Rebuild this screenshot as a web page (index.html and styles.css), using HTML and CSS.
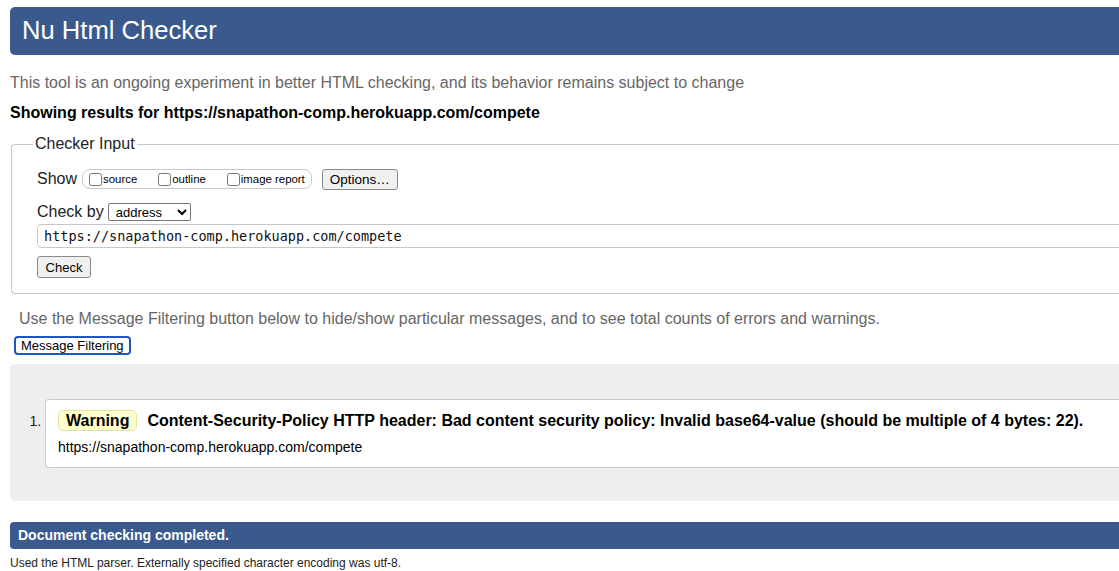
FILE: index.html
```html
<!DOCTYPE html>
<html lang="en">
<head>
<meta charset="utf-8">
<title>Showing results for https://snapathon-comp.herokuapp.com/compete - Nu Html Checker</title>
<link rel="stylesheet" href="styles.css">
</head>
<body>
<div class="page">
  <h1 class="title">Nu Html Checker</h1>
  <p class="intro">This tool is an ongoing experiment in better HTML checking, and its behavior remains subject to change</p>
  <p class="results-for">Showing results for https://snapathon-comp.herokuapp.com/compete</p>

  <form class="checker-form">
    <fieldset class="checker-input">
      <legend class="legend">Checker Input</legend>
      <div class="row show-row">
        <span class="label">Show</span>
        <span class="show-box">
          <label class="opt"><input type="checkbox" class="cb">source</label>
          <label class="opt"><input type="checkbox" class="cb">outline</label>
          <label class="opt"><input type="checkbox" class="cb">image report</label>
        </span>
        <button type="button" class="btn options-btn">Options…</button>
      </div>
      <div class="row checkby-row">
        <span class="label">Check by</span>
        <select class="select">
          <option>address</option>
        </select>
      </div>
      <div class="url-field">https://snapathon-comp.herokuapp.com/compete</div>
      <button type="button" class="btn check-btn">Check</button>
    </fieldset>
  </form>

  <p class="filter-note">Use the Message Filtering button below to hide/show particular messages, and to see total counts of errors and warnings.</p>
  <button type="button" class="btn filter-btn">Message Filtering</button>

  <div class="results">
    <ol class="messages">
      <li class="message">
        <p class="msg-line"><span class="badge">Warning</span><span class="msg-text">Content-Security-Policy HTTP header: Bad content security policy: Invalid base64-value (should be multiple of 4 bytes: 22).</span></p>
        <p class="msg-url">https://snapathon-comp.herokuapp.com/compete</p>
      </li>
    </ol>
  </div>

  <h2 class="done">Document checking completed.</h2>
  <p class="parser-note">Used the HTML parser. Externally specified character encoding was utf-8.</p>
</div>
</body>
</html>
```

FILE: styles.css
```css
html {
  overflow: hidden;
  background: #fff;
}
body {
  margin: 7px 0 0 10px;
  font-family: "Liberation Sans", Arial, sans-serif;
  color: #000;
}
.page {
  width: 1160px;
}
.title {
  margin: 0;
  height: 48px;
  line-height: 47px;
  padding-left: 12px;
  background: #3a598c;
  color: #fff;
  font-size: 25.6px;
  font-weight: normal;
  border-radius: 5px 0 0 5px;
}
.intro {
  margin: 18px 0 0;
  font-size: 16px;
  line-height: 20px;
  color: #666;
}
.results-for {
  margin: 10px 0 0;
  font-size: 16px;
  line-height: 20px;
  font-weight: bold;
}
.checker-form {
  margin: 11px 0 0 1px;
}
.checker-input {
  margin: 0;
  padding: 0 25px 15px;
  border: 1px solid #c8c8c8;
  border-right: none;
  border-radius: 4px 0 0 4px;
}
.legend {
  margin-left: -4px;
  padding: 0 2px;
  font-size: 16px;
  line-height: 20px;
  color: #222;
}
.row {
  display: flex;
  align-items: center;
}
.show-row {
  margin-top: 14px;
  height: 22px;
}
.label {
  font-size: 16px;
  color: #222;
}
.show-box {
  display: flex;
  align-items: center;
  height: 18px;
  margin-left: 5px;
  padding: 0 6px 0 5px;
  border: 1px solid #c8c8c8;
  border-radius: 8px;
  font-size: 11.4px;
}
.opt {
  display: flex;
  align-items: center;
  margin-right: 20px;
}
.opt:last-child {
  margin-right: 0;
}
.cb {
  margin: 0 1px 0 1px;
  width: 13px;
  height: 13px;
}
.btn {
  font-family: "Liberation Sans", Arial, sans-serif;
  font-size: 13px;
  color: #000;
  background: #f0f0f0;
  border: 1px solid #8a8a8a;
  border-radius: 3px;
  padding: 0 6px;
  margin: 0;
}
.options-btn {
  margin-left: 10px;
  height: 21px;
  font-size: 13.5px;
  padding: 0 7px;
}
.checkby-row {
  margin-top: 12px;
  height: 20px;
}
.select {
  margin-left: 4px;
  height: 18px;
  width: 83px;
  font-family: "Liberation Sans", Arial, sans-serif;
  font-size: 13px;
  border: 1px solid #777;
  border-radius: 2px;
  background: #fff;
  padding: 0 0 0 3px;
}
.url-field {
  margin-top: 2px;
  height: 22px;
  line-height: 22px;
  padding-left: 6px;
  border: 1px solid #c8c8c8;
  border-right: none;
  border-radius: 5px 0 0 5px;
  font-family: "DejaVu Sans Mono", "Liberation Mono", monospace;
  font-size: 13.5px;
  color: #111;
}
.check-btn {
  display: block;
  margin-top: 8px;
  height: 22px;
  width: 54px;
  padding: 0;
}
.filter-note {
  margin: 15px 0 0 9px;
  font-size: 16px;
  line-height: 20px;
  color: #666;
}
.filter-btn {
  display: block;
  margin: 7px 0 0 4px;
  height: 19px;
  padding: 0 5px;
  border: 2px solid #2056c4;
  border-radius: 4px;
  background: #fff;
  line-height: 14px;
}
.results {
  margin-top: 9px;
  padding: 35px 0 33px 35px;
  background: #eee;
  border-radius: 5px 0 0 5px;
}
.messages {
  margin: 0;
  padding: 0;
}
.message {
  padding: 10px 12px 11px;
  background: #fff;
  border: 1px solid #ccc;
  border-right: none;
  border-radius: 4px 0 0 4px;
}
.message::marker {
  font-size: 14px;
  color: #222;
}
.msg-line {
  margin: 0;
  display: flex;
  align-items: center;
  white-space: nowrap;
  font-size: 16px;
}
.badge {
  display: inline-block;
  padding: 0 7px;
  height: 19px;
  line-height: 19px;
  background: #ffffcc;
  border: 1px solid #e2e2a8;
  border-radius: 5px;
  font-weight: bold;
  margin-right: 10px;
}
.msg-text {
  font-weight: bold;
}
.msg-url {
  margin: 7px 0 0;
  font-size: 14px;
  line-height: 18px;
}
.done {
  margin: 21px 0 0;
  height: 27px;
  line-height: 27px;
  padding-left: 8px;
  background: #3a598c;
  color: #fff;
  font-size: 14px;
  font-weight: bold;
  border-radius: 4px 0 0 4px;
}
.parser-note {
  margin: 7px 0 0;
  font-size: 12px;
  line-height: 14px;
  color: #222;
}
```
